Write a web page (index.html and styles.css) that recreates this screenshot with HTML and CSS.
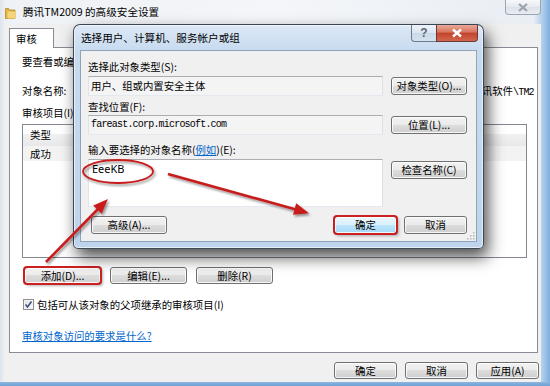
FILE: index.html
```html
<!DOCTYPE html>
<html lang="zh-CN">
<head>
<meta charset="utf-8">
<title>腾讯TM2009 的高级安全设置</title>
<link rel="stylesheet" href="styles.css">
</head>
<body>
<div class="window">
  <div class="titlebar">
    <svg class="ficon" width="11" height="13" viewBox="0 0 11 13">
      <path d="M0.5 2.5h3l1 1.5h5.5v8.5h-9.5z" fill="#e2b544" stroke="#b58a22" stroke-width="0.8"/>
      <path d="M2.5 5.5h8v7h-8z" fill="#f3d57a"/>
    </svg>
    <span class="title">腾讯TM2009 的高级安全设置</span>
    <div class="wclose">
      <svg width="12" height="9" viewBox="0 0 12 9"><path d="M2 1l8 7M10 1l-8 7" stroke="#9aa2ac" stroke-width="2.2"/></svg>
    </div>
  </div>
  <div class="client">
    <div class="tabs"><div class="tab">审核</div></div>
    <div class="panel">
      <div class="desc">要查看或编辑审核项目的详细信息，请双击该项目。</div>
      <div class="objrow"><span class="objlabel">对象名称:</span><span class="objval"><span class="mono">C:\Program Files\</span>腾讯软件<span class="mono">\TM2009</span></span></div>
      <div class="lbl">审核项目(I):</div>
      <div class="list">
        <div class="lhead">类型</div>
        <div class="lrow">成功</div>
      </div>
      <div class="btnrow">
        <button class="btn w77 hl">添加(D)...</button>
        <button class="btn w77">编辑(E)...</button>
        <button class="btn w77">删除(R)</button>
      </div>
      <div class="chkrow">
        <span class="chk"><svg width="9" height="9" viewBox="0 0 9 9"><path d="M1.5 4.5l2 2.5 4-5.5" fill="none" stroke="#3d5282" stroke-width="1.6"/></svg></span>
        <span>包括可从该对象的父项继承的审核项目(I)</span>
      </div>
      <a class="link">审核对象访问的要求是什么?</a>
    </div>
    <div class="footer">
      <button class="btn w63">确定</button>
      <button class="btn w63">取消</button>
      <button class="btn w63">应用(A)</button>
    </div>
  </div>
</div>

<div class="dialog">
  <div class="dtitle">
    <span class="dtext">选择用户、计算机、服务帐户或组</span>
    <div class="qbtn">?</div>
    <div class="xbtn"><svg width="14" height="10" viewBox="0 0 14 10"><path d="M3 1.5l8 7M11 1.5l-8 7" stroke="#fff" stroke-width="2.4"/></svg></div>
  </div>
  <div class="dbody">
    <div class="dl dl1">选择此对象类型(S):</div>
    <div class="drow r1">
      <div class="dfield">用户、组或内置安全主体</div>
      <button class="btn dbtn">对象类型(O)...</button>
    </div>
    <div class="dl dl2">查找位置(F):</div>
    <div class="drow r2">
      <div class="dfield mono">fareast.corp.microsoft.com</div>
      <button class="btn dbtn">位置(L)...</button>
    </div>
    <div class="dl dl3">输入要选择的对象名称(<a class="link inl">例如</a>)(E):</div>
    <div class="drow r3">
      <div class="dtext-area">EeeKB</div>
      <button class="btn dbtn chkbtn">检查名称(C)</button>
    </div>
    <div class="dfoot">
      <button class="btn adv">高级(A)...</button>
      <button class="btn w63 def hl">确定</button>
      <button class="btn w63">取消</button>
    </div>
    <svg class="grip" width="8" height="8" viewBox="0 0 8 8">
      <g fill="#b5b5b5"><rect x="6" y="0" width="1.5" height="1.5"/><rect x="3" y="3" width="1.5" height="1.5"/><rect x="6" y="3" width="1.5" height="1.5"/><rect x="0" y="6" width="1.5" height="1.5"/><rect x="3" y="6" width="1.5" height="1.5"/><rect x="6" y="6" width="1.5" height="1.5"/></g>
    </svg>
  </div>
</div>

<svg class="annot" width="550" height="386" viewBox="0 0 550 386">
  <defs>
    <filter id="sh" x="-20%" y="-20%" width="140%" height="140%">
      <feDropShadow dx="1.5" dy="2" stdDeviation="1.2" flood-color="#000" flood-opacity="0.4"/>
    </filter>
  </defs>
  <g filter="url(#sh)">
    <ellipse cx="118" cy="171.5" rx="35" ry="11.5" fill="none" stroke="#c81e1e" stroke-width="1.8"/>
    <line x1="168" y1="174" x2="296" y2="209.6" stroke="#c81e1e" stroke-width="2.6"/>
    <polygon points="309,213.3 293,214.8 296.2,203.2" fill="#c81e1e"/>
    <line x1="46" y1="262" x2="99" y2="208" stroke="#c81e1e" stroke-width="2.6"/>
    <polygon points="108,199 101.6,213.8 93.2,205.4" fill="#c81e1e"/>
  </g>
</svg>
</body>
</html>
```

FILE: styles.css
```css
* { box-sizing: border-box; }
html, body { margin: 0; width: 550px; height: 386px; overflow: hidden; }
body {
  position: relative;
  font-family: "Noto Sans CJK SC", "Noto Sans", sans-serif;
  font-size: 10.4px;
  color: #000;
}

.window {
  width: 550px;
  height: 386px;
  display: flex;
  flex-direction: column;
  padding: 0 9px 4px 4px;
  background:
    linear-gradient(180deg, rgba(0,0,0,0) 382px, #8db6e0 382px, #6f9fd3 386px),
    linear-gradient(90deg, #dde4ec 0, #eef1f5 1%, #f4f6f9 50%, #e9eef4 97%, #b8d2ec 98.4%, #7eaee0 100%);
}

.titlebar {
  height: 24px;
  display: flex;
  align-items: center;
  padding-left: 1px;
}
.ficon { margin-right: 7px; margin-top: 1px; }
.title { font-size: 10.6px; line-height: 14px; }
.wclose {
  margin-left: auto;
  align-self: flex-start;
  width: 36px;
  height: 15px;
  border: 1px solid #9ba6b4;
  border-top: none;
  border-radius: 0 0 4px 4px;
  background: linear-gradient(180deg, #f7f8fa, #e6eaef 50%, #dde2e8 51%, #e9edf2);
  display: flex;
  align-items: center;
  justify-content: center;
}

.client {
  flex: 1;
  background: #f0f0f0;
  display: flex;
  flex-direction: column;
  padding: 4px 2px 3px 5px;
}
.tabs { display: flex; height: 20px; margin-bottom: -1px; position: relative; z-index: 1; }
.tab {
  width: 45px;
  height: 20px;
  background: #fff;
  border: 1px solid #898c95;
  border-bottom: none;
  padding-left: 6px;
  line-height: 19px;
}
.panel {
  height: 306px;
  margin-right: 1px;
  background: #fff;
  border: 1px solid #898c95;
  padding: 0 10px 0 12px;
}
.desc { margin-top: 7px; line-height: 14px; white-space: nowrap; }
.objrow {
  margin-top: 15px;
  height: 14px;
  line-height: 14px;
  display: flex;
  overflow: hidden;
  margin-right: -7px;
  white-space: nowrap;
}
.objlabel { flex: 0 0 361px; }
.objval { flex: none; }
.lbl { margin-top: 8px; line-height: 14px; }
.list {
  margin-top: 4px;
  height: 134px;
  border: 1px solid #828790;
}
.lhead {
  height: 21px;
  line-height: 19px;
  padding-left: 7px;
  background: linear-gradient(180deg, #fff 0, #fff 40%, #f1f1f1 45%, #e8e8e8 100%);
}
.lrow {
  height: 15px;
  line-height: 15px;
  padding-left: 7px;
  background: #f3f3f3;
}
.btnrow { margin-top: 9px; display: flex; gap: 9px; padding-left: 2px; }
.chkrow { margin-top: 13px; height: 14px; display: flex; align-items: center; gap: 3px; padding-left: 1px; }
.chk {
  width: 11px;
  height: 11px;
  border: 1px solid #8f8f8f;
  background: linear-gradient(135deg, #e0e0e0, #fbfbfb);
  box-shadow: inset 0 0 0 1px #f4f4f4;
  display: flex;
  align-items: center;
  justify-content: center;
}
.link { color: #0066cc; text-decoration: underline; }
.panel .link { display: block; margin-top: 18px; line-height: 14px; }
.footer { display: flex; justify-content: flex-end; gap: 8px; margin-top: 9px; }

.btn {
  font: inherit;
  color: #000;
  height: 17px;
  padding: 0;
  border: 1px solid #707070;
  border-radius: 3px;
  background: linear-gradient(180deg, #f2f2f2 0, #ebebeb 50%, #dddddd 50%, #cfcfcf 100%);
  box-shadow: inset 0 0 0 1px rgba(255,255,255,0.8);
  display: flex;
  align-items: center;
  justify-content: center;
  line-height: 14px;
  white-space: nowrap;
}
.w77 { width: 77px; }
.w63 { width: 63px; }
.hl {
  outline: 2px solid #cc2020;
  outline-offset: -1px;
  box-shadow: inset 0 0 0 1px rgba(255,255,255,0.8), 2px 2px 3px rgba(0,0,0,0.3);
}

/* dialog */
.dialog {
  position: absolute;
  left: 73px;
  top: 24px;
  width: 411px;
  height: 225px;
  border: 1px solid rgba(35,45,60,0.85);
  border-radius: 7px 7px 5px 5px;
  background: linear-gradient(180deg, #dce8f5 0, #c7dbef 26px, #bed4ec 100%);
  box-shadow: inset 0 0 0 1px rgba(255,255,255,0.6), 4px 8px 16px rgba(0,0,0,0.7);
  padding: 0 6px 6px;
  display: flex;
  flex-direction: column;
}
.dtitle { height: 25px; display: flex; align-items: center; padding-left: 1px; }
.dtext { font-size: 10.6px; line-height: 14px; }
.qbtn {
  margin-left: auto;
  align-self: flex-start;
  width: 25px;
  height: 17px;
  border: 1px solid #6c7a8c;
  border-top: none;
  border-right: none;
  border-radius: 0 0 0 4px;
  background: linear-gradient(180deg, #eef3f9, #dbe5f0 50%, #cad8e8 51%, #d6e2ef);
  font-family: "Liberation Sans", sans-serif;
  font-size: 12px;
  font-weight: bold;
  color: #5b6675;
  text-align: center;
  line-height: 16px;
}
.xbtn {
  align-self: flex-start;
  margin-right: -1px;
  width: 42px;
  height: 17px;
  border: 1px solid #6b3a36;
  border-top: none;
  border-radius: 0 0 4px 0;
  background: linear-gradient(180deg, #e9a998 0, #d7735e 45%, #c4422b 50%, #d0674f 100%);
  display: flex;
  align-items: center;
  justify-content: center;
}
.dbody {
  position: relative;
  flex: 1;
  background: #f0f0f0;
  border: 1px solid #8fa3bb;
  padding: 0 9px 0 7px;
}
.dl { line-height: 14px; white-space: nowrap; }
.dl1 { margin-top: 9px; }
.dl2 { margin-top: 4px; }
.dl3 { margin-top: 8px; }
.drow { display: grid; grid-template-columns: 295px 76px; column-gap: 8px; align-items: center; }
.r1 { margin-top: 2px; }
.r2 { margin-top: 1px; }
.r3 { margin-top: 2px; align-items: start; }
.dfield {
  height: 20px;
  border: 1px solid;
  border-color: #abadb3 #dbdfe6 #e3e9ef #e2e3ea;
  background: #f4f4f4;
  padding-left: 2px;
  line-height: 18px;
  white-space: nowrap;
}
.mono {
  font-family: "Liberation Mono", monospace;
  font-size: 10px;
  letter-spacing: -0.8px;
}
.dbtn { height: 18px; }
.dtext-area {
  height: 48px;
  border: 1px solid;
  border-color: #abadb3 #dbdfe6 #e3e9ef #e2e3ea;
  background: #fff;
  padding: 2px 0 0 3px;
  font-family: "Noto Sans", sans-serif;
  font-size: 11px;
  line-height: 14px;
}
.chkbtn { margin-top: 2px; }
.dfoot { margin-top: 9px; display: flex; gap: 7px; }
.adv { width: 76px; height: 18px; margin-left: 3px; margin-right: auto; }
.dfoot .w63 { height: 18px; }
.def {
  border-color: #3c7fb1;
  background: linear-gradient(180deg, #eaf6fd 0, #d9f0fc 50%, #bee6fd 50%, #a7d9f5 100%);
}
.inl { color: #0066cc; }
.grip { position: absolute; right: 1px; bottom: 1px; }

.annot { position: absolute; left: 0; top: 0; pointer-events: none; }
```
